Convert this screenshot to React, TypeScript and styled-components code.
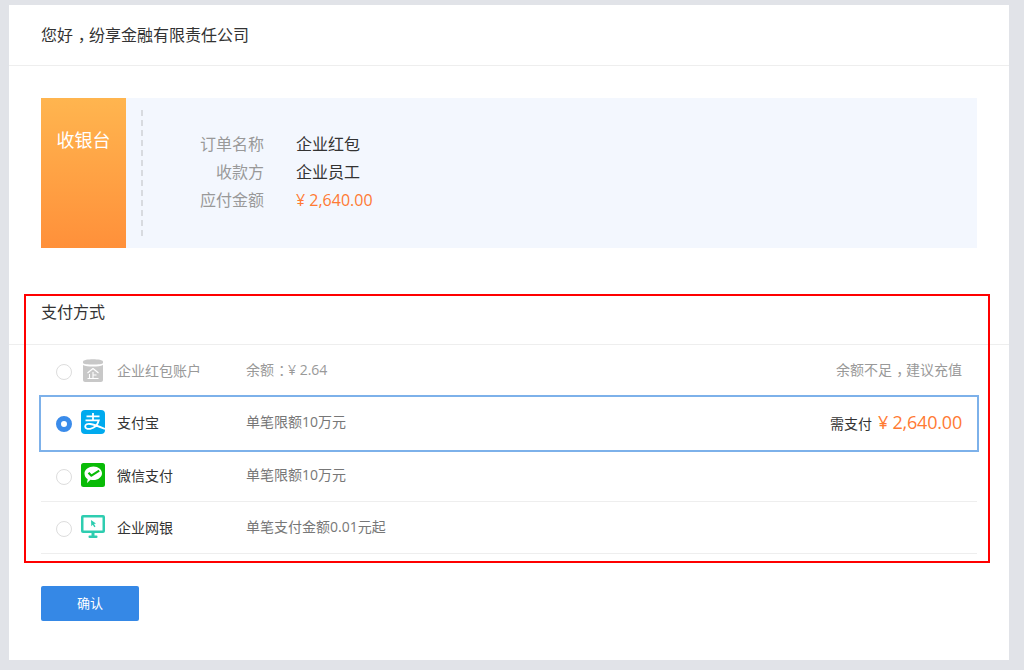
import React from "react";
import styled, { createGlobalStyle } from "styled-components";

const GlobalStyle = createGlobalStyle`
  html, body {
    margin: 0;
    padding: 0;
    background: #e1e3e8;
  }
  body {
    font-family: "Open Sans", "Noto Sans CJK SC", sans-serif;
    color: #333;
  }
`;

const Page = styled.div`
  height: 670px;
  padding: 5px 15px 10px 9px;
  box-sizing: border-box;
`;

const Card = styled.div`
  height: 655px;
  background: #fff;
`;

const Header = styled.div`
  height: 58px;
  padding: 0 0 2px 32px;
  display: flex;
  align-items: center;
  border-bottom: 1px solid #eee;
  font-size: 16px;
  color: #333;
`;

// full width punctuation sits in the middle of its cell in the reference
const Punct = styled.span`
  display: inline-block;
  padding: 0 0.2em 0 0.3em;
  font-family: "Noto Sans CJK SC", sans-serif;
  font-feature-settings: "halt";
`;

const Banner = styled.div`
  height: 150px;
  margin: 32px 32px 0;
  display: flex;
  background: #f3f7fe;
`;

const BannerTag = styled.div`
  width: 85px;
  padding-top: 29px;
  box-sizing: border-box;
  text-align: center;
  font-size: 18px;
  line-height: 26px;
  color: #fff;
  background: linear-gradient(180deg, #ffb54f, #ff903a);
`;

const BannerBody = styled.div`
  margin: 12px 0 12px 15px;
  padding-top: 20px;
  border-left: 2px dashed #d8dbe0;
  display: grid;
  grid-template-columns: 121px auto;
  grid-auto-rows: 28px;
  column-gap: 32px;
  align-content: start;
  font-size: 16px;
  line-height: 28px;
`;

const InfoLabel = styled.div`
  text-align: right;
  color: #999;
`;

const InfoValue = styled.div<{ $price?: boolean }>`
  color: ${(p) => (p.$price ? "#ff7a33" : "#333")};
`;

const PaySection = styled.div`
  position: relative;
  margin-top: 46px;
`;

const RedFrame = styled.div`
  position: absolute;
  left: 15px;
  right: 19px;
  top: 0;
  bottom: -9px;
  border: 2px solid #f00;
  pointer-events: none;
`;

const SectionTitle = styled.div`
  height: 51px;
  padding: 6px 32px 0;
  box-sizing: border-box;
  border-bottom: 1px solid #eee;
  font-size: 16px;
  line-height: 24px;
  color: #333;
`;

const MethodList = styled.div`
  margin: 0 32px;
`;

const Method = styled.div<{ $height: number; $lift?: number; $selected?: boolean; $divided?: boolean; $disabled?: boolean }>`
  height: ${(p) => p.$height}px;
  margin: ${(p) => (p.$selected ? "0 -2px" : "0")};
  padding: 0 15px ${(p) => p.$lift ?? 0}px;
  box-sizing: border-box;
  display: flex;
  align-items: center;
  font-size: 14px;
  color: ${(p) => (p.$disabled ? "#999" : "#333")};
  border: ${(p) => (p.$selected ? "2px solid #7db1ea" : "none")};
  border-bottom: ${(p) =>
    p.$selected ? "2px solid #7db1ea" : p.$divided ? "1px solid #eee" : "none"};
`;

const Radio = styled.span<{ $checked?: boolean }>`
  width: 16px;
  height: 16px;
  margin-top: 3px;
  box-sizing: border-box;
  flex: none;
  border-radius: 50%;
  border: ${(p) => (p.$checked ? "5px solid #3a8bea" : "1px solid #ddd")};
  background: #fff;
`;

const IconSlot = styled.span`
  width: 24px;
  height: 24px;
  flex: none;
  margin-left: 9px;
  display: block;
  svg {
    display: block;
  }
`;

const MethodName = styled.span`
  width: 129px;
  flex: none;
  margin-left: 12px;
`;

const MethodNote = styled.span<{ $muted?: boolean }>`
  flex: 1;
  margin-top: -2px;
  color: ${(p) => (p.$muted ? "#999" : "#777")};
`;

const MethodHint = styled.span`
  margin-top: -2px;
  color: #999;
`;

const PayDue = styled.span`
  display: flex;
  align-items: center;
`;

const NeedPay = styled.span`
  margin-top: 2px;
  color: #333;
`;

const Amount = styled.span`
  margin-left: 6px;
  font-size: 18px;
  letter-spacing: -0.2px;
  color: #ff7a33;
`;

const ConfirmButton = styled.button`
  display: block;
  width: 98px;
  height: 35px;
  margin: 32px 0 0 32px;
  padding: 0 0 2px;
  border: none;
  border-radius: 2px;
  background: #3588e6;
  color: #fff;
  font-family: inherit;
  font-size: 13px;
`;

const PurseIcon = () => (
  <svg width="24" height="24" viewBox="0 0 24 24">
    <path d="M2 3.500C2 .5 22 .5 22 3.500V5c0 2-20 2-20 0z" fill="#c8c8c8" />
    <path d="M2 7c4 2 16 2 20 0v15c0 1-1 2-2 2H4c-1 0-2-1-2-2z" fill="#c8c8c8" />
    <path d="M12 10.500l5.500 4.500M12 10.500L6.500 15M12 14v6.500M12 17h3.500M8.500 16v4.500M6.500 20.500h11" stroke="#fff" strokeWidth="1.100" fill="none" />
  </svg>
);

const AlipayIcon = () => (
  <svg width="24" height="24" viewBox="0 0 24 24">
    <rect width="24" height="24" rx="4" fill="#00aaee" />
    <path d="M5.500 6.300h13M12 3v7M4.500 10.300h13.300c-1 4-4 7.700-8.600 8.500-3 .5-5-.5-5-2.300 0-2 2.300-3 5-2.500 3.500.6 8.500 2.400 14.800 5" stroke="#fff" strokeWidth="1.800" fill="none" />
  </svg>
);

const WechatIcon = () => (
  <svg width="24" height="24" viewBox="0 0 24 24">
    <rect width="24" height="24" rx="2.500" fill="#09bb07" />
    <path d="M12.500 3.500c4.700 0 8.500 3 8.500 6.800s-3.800 6.800-8.500 6.800c-1 0-2-.1-3-.4L6 20l.7-3.700C4.500 15 3.500 12.800 3.500 10.300c0-3.800 4.300-6.800 9-6.800z" fill="#fff" />
    <path d="M7.500 9.800l2.900 2.800 7.800-5" stroke="#09bb07" strokeWidth="2.200" strokeLinejoin="round" fill="none" />
  </svg>
);

const BankIcon = () => (
  <svg width="24" height="24" viewBox="0 0 24 24">
    <rect width="24" height="18" rx="2" fill="#2ecdb0" />
    <rect x="2.500" y="2.500" width="19" height="13" fill="#fff" />
    <path d="M10 5l5 3.500-2 .6 1.500 2.400-1.200.7-1.500-2.400-1.500 1.500z" fill="#2ecdb0" />
    <rect x="10.500" y="18" width="3" height="3" fill="#2ecdb0" />
    <rect x="7.500" y="20.500" width="9" height="2.500" rx="1" fill="#2ecdb0" />
  </svg>
);

const App: React.FC = () => {
  return (
    <Page>
      <GlobalStyle />
      <Card>
        <Header>您好<Punct>，</Punct>纷享金融有限责任公司</Header>

        <Banner>
          <BannerTag>收银台</BannerTag>
          <BannerBody>
            <InfoLabel>订单名称</InfoLabel>
            <InfoValue>企业红包</InfoValue>
            <InfoLabel>收款方</InfoLabel>
            <InfoValue>企业员工</InfoValue>
            <InfoLabel>应付金额</InfoLabel>
            <InfoValue $price>¥ 2,640.00</InfoValue>
          </BannerBody>
        </Banner>

        <PaySection>
          <RedFrame />
          <SectionTitle>支付方式</SectionTitle>
          <MethodList>
            <Method $height={50} $disabled>
              <Radio />
              <IconSlot><PurseIcon /></IconSlot>
              <MethodName>企业红包账户</MethodName>
              <MethodNote $muted>余额<Punct>：</Punct>¥ 2.64</MethodNote>
              <MethodHint>余额不足<Punct>，</Punct>建议充值</MethodHint>
            </Method>
            <Method $height={57} $lift={3} $selected>
              <Radio $checked />
              <IconSlot><AlipayIcon /></IconSlot>
              <MethodName>支付宝</MethodName>
              <MethodNote>单笔限额10万元</MethodNote>
              <PayDue>
                <NeedPay>需支付</NeedPay>
                <Amount>¥ 2,640.00</Amount>
              </PayDue>
            </Method>
            <Method $height={50} $lift={3} $divided>
              <Radio />
              <IconSlot><WechatIcon /></IconSlot>
              <MethodName>微信支付</MethodName>
              <MethodNote>单笔限额10万元</MethodNote>
            </Method>
            <Method $height={52} $lift={1} $divided>
              <Radio />
              <IconSlot><BankIcon /></IconSlot>
              <MethodName>企业网银</MethodName>
              <MethodNote>单笔支付金额0.01元起</MethodNote>
            </Method>
          </MethodList>
        </PaySection>

        <ConfirmButton>确认</ConfirmButton>
      </Card>
    </Page>
  );
};

export default App;
